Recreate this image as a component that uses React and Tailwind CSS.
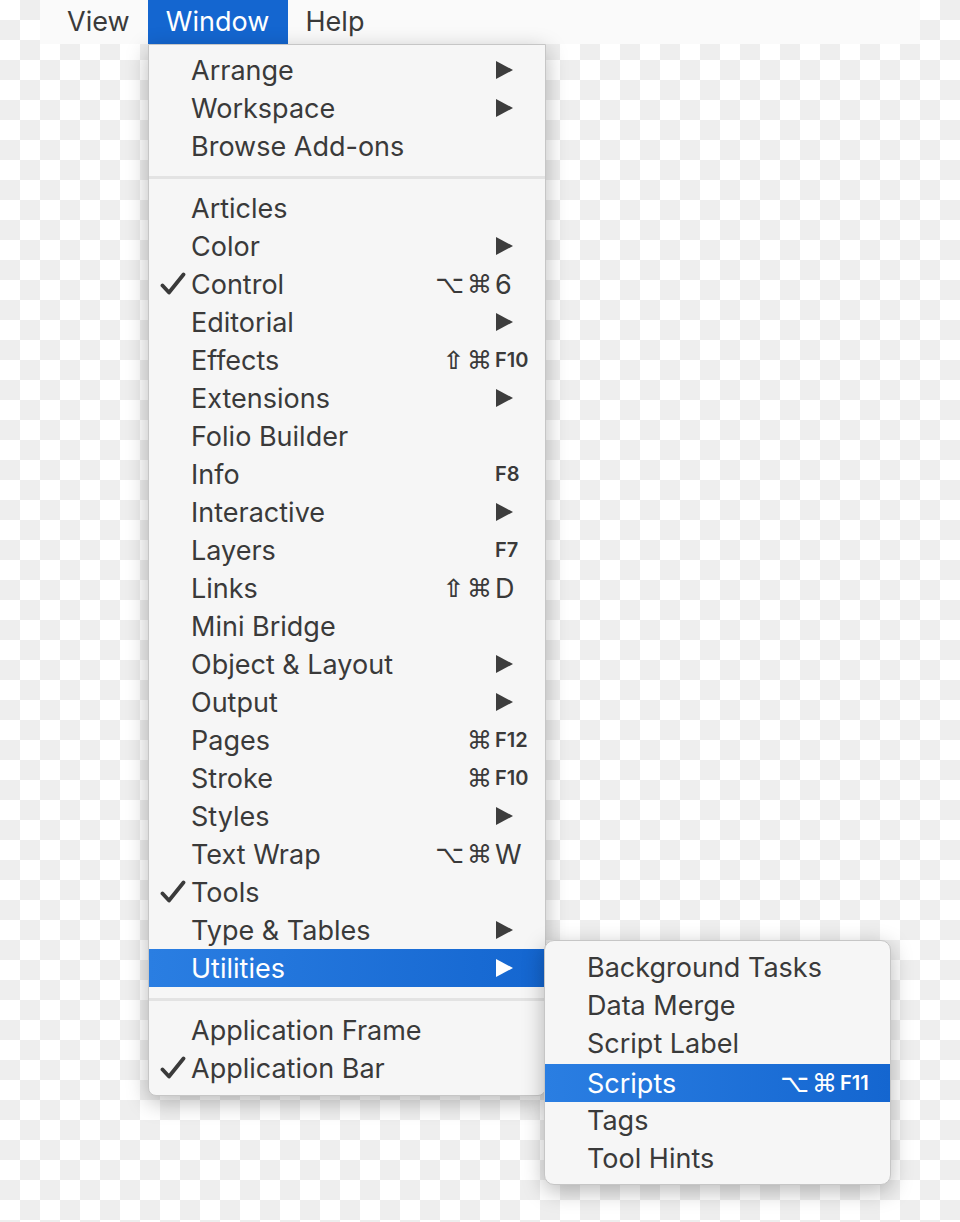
import React from 'react';

const TEXT = 'text-[#3a3a3a]';

const mainGroups = [
  [
    { label: 'Arrange', sub: true },
    { label: 'Workspace', sub: true },
    { label: 'Browse Add-ons' },
  ],
  [
    { label: 'Articles' },
    { label: 'Color', sub: true },
    { label: 'Control', check: true, mods: '⌥⌘', key: '6' },
    { label: 'Editorial', sub: true },
    { label: 'Effects', mods: '⇧⌘', key: 'F10' },
    { label: 'Extensions', sub: true },
    { label: 'Folio Builder' },
    { label: 'Info', key: 'F8' },
    { label: 'Interactive', sub: true },
    { label: 'Layers', key: 'F7' },
    { label: 'Links', mods: '⇧⌘', key: 'D' },
    { label: 'Mini Bridge' },
    { label: 'Object & Layout', sub: true },
    { label: 'Output', sub: true },
    { label: 'Pages', mods: '⌘', key: 'F12' },
    { label: 'Stroke', mods: '⌘', key: 'F10' },
    { label: 'Styles', sub: true },
    { label: 'Text Wrap', mods: '⌥⌘', key: 'W' },
    { label: 'Tools', check: true },
    { label: 'Type & Tables', sub: true },
    { label: 'Utilities', sub: true, active: true },
  ],
  [
    { label: 'Application Frame' },
    { label: 'Application Bar', check: true },
  ],
];

const subItems = [
  { label: 'Background Tasks' },
  { label: 'Data Merge' },
  { label: 'Script Label' },
  { label: 'Scripts', mods: '⌥⌘', key: 'F11', active: true },
  { label: 'Tags' },
  { label: 'Tool Hints' },
];

const Check = ({ active }) => (
  <svg width="26" height="24" viewBox="0 0 26 24" className="block">
    <path d="M2.5 13.5 L9 20.5 L23.5 2.5" fill="none" stroke={active ? '#fff' : '#3a3a3a'} strokeWidth="3.8" strokeLinecap="round" strokeLinejoin="round" />
  </svg>
);

const Arrow = ({ active }) => (
  <svg width="18" height="18" viewBox="0 0 18 18" className="block">
    <polygon points="0,0 17,9 0,18" fill={active ? '#fff' : '#3d3d3d'} />
  </svg>
);

const Shortcut = ({ mods, keyName, active }) => {
  const small = keyName.startsWith('F');
  return (
    <div className={`flex items-center ${active ? 'text-white' : TEXT}`}>
      <span className="flex w-[70px] justify-end gap-[3px] font-['DejaVu_Sans',sans-serif] text-[25px] leading-none">
        {(mods || '').split('').map((m, i) => (
          <span key={i} className={m === '⇧' ? 'font-bold' : ''}>{m}</span>
        ))}
      </span>
      <span
        className={`w-[38px] pl-[3px] font-['Inter',sans-serif] leading-none ${
          small ? 'text-[20px] font-semibold' : 'text-[27px]'
        }`}
      >
        {keyName}
      </span>
    </div>
  );
};

const MenuRow = ({ item, textLeft, extra = '' }) => {
  const active = item.active;
  return (
    <div
      className={`relative flex h-[38px] items-center ${extra} ${
        active ? 'bg-gradient-to-r from-[#2a7ee2] to-[#1466d0] text-white' : TEXT
      }`}
    >
      {item.check && (
        <div className="absolute left-[11px] top-[7px]">
          <Check active={active} />
        </div>
      )}
      <span className={`${textLeft} flex-1 text-[27px] leading-none`}>{item.label}</span>
      {item.sub && (
        <div className="mr-[31px]">
          <Arrow active={active} />
        </div>
      )}
      {item.key && (
        <div className="mr-[15px]">
          <Shortcut mods={item.mods} keyName={item.key} active={active} />
        </div>
      )}
    </div>
  );
};

const Separator = () => (
  <div className="flex h-[24px] items-center">
    <div className="h-[3px] w-full bg-[#e3e3e3]" />
  </div>
);

export default function App() {
  return (
    <div className="relative h-[1222px] w-[960px] overflow-hidden bg-[conic-gradient(#eee_25%,#fff_0_50%,#eee_0_75%,#fff_0)] bg-[length:40px_40px] font-['Inter',sans-serif]">
      {/* menu bar */}
      <div className={`ml-[40px] flex h-[44px] w-[880px] items-stretch bg-[#fafafa] text-[27px] ${TEXT}`}>
        <div className="flex items-center pl-[27px] pr-[20px]">View</div>
        <div className="-ml-[2px] flex w-[140px] items-center justify-center bg-[#1466d0] text-white">Window</div>
        <div className="flex items-center pl-[18px]">Help</div>
      </div>

      {/* Window menu */}
      <div className="absolute left-[148px] top-[44px] w-[398px] rounded-b-[8px] border border-[#c6c6c6] bg-[#f6f6f6] pb-[8px] pt-[6px] shadow-[0_6px_22px_rgba(0,0,0,0.28)]">
        {mainGroups.map((group, gi) => (
          <div key={gi}>
            {gi > 0 && <Separator />}
            {group.map((item) => (
              <MenuRow key={item.label} item={item} textLeft="pl-[42px]" />
            ))}
          </div>
        ))}
      </div>

      {/* Utilities submenu */}
      <div className="absolute left-[544px] top-[940px] w-[347px] rounded-[10px] border border-[#c6c6c6] bg-[#f6f6f6] pb-[7px] pt-[7px] shadow-[0_6px_22px_rgba(0,0,0,0.28)]">
        {subItems.map((item) => (
          <MenuRow
            key={item.label}
            item={item}
            textLeft="pl-[42px]"
            extra={item.active ? 'mt-[2px] -mb-[1px]' : ''}
          />
        ))}
      </div>
    </div>
  );
}
